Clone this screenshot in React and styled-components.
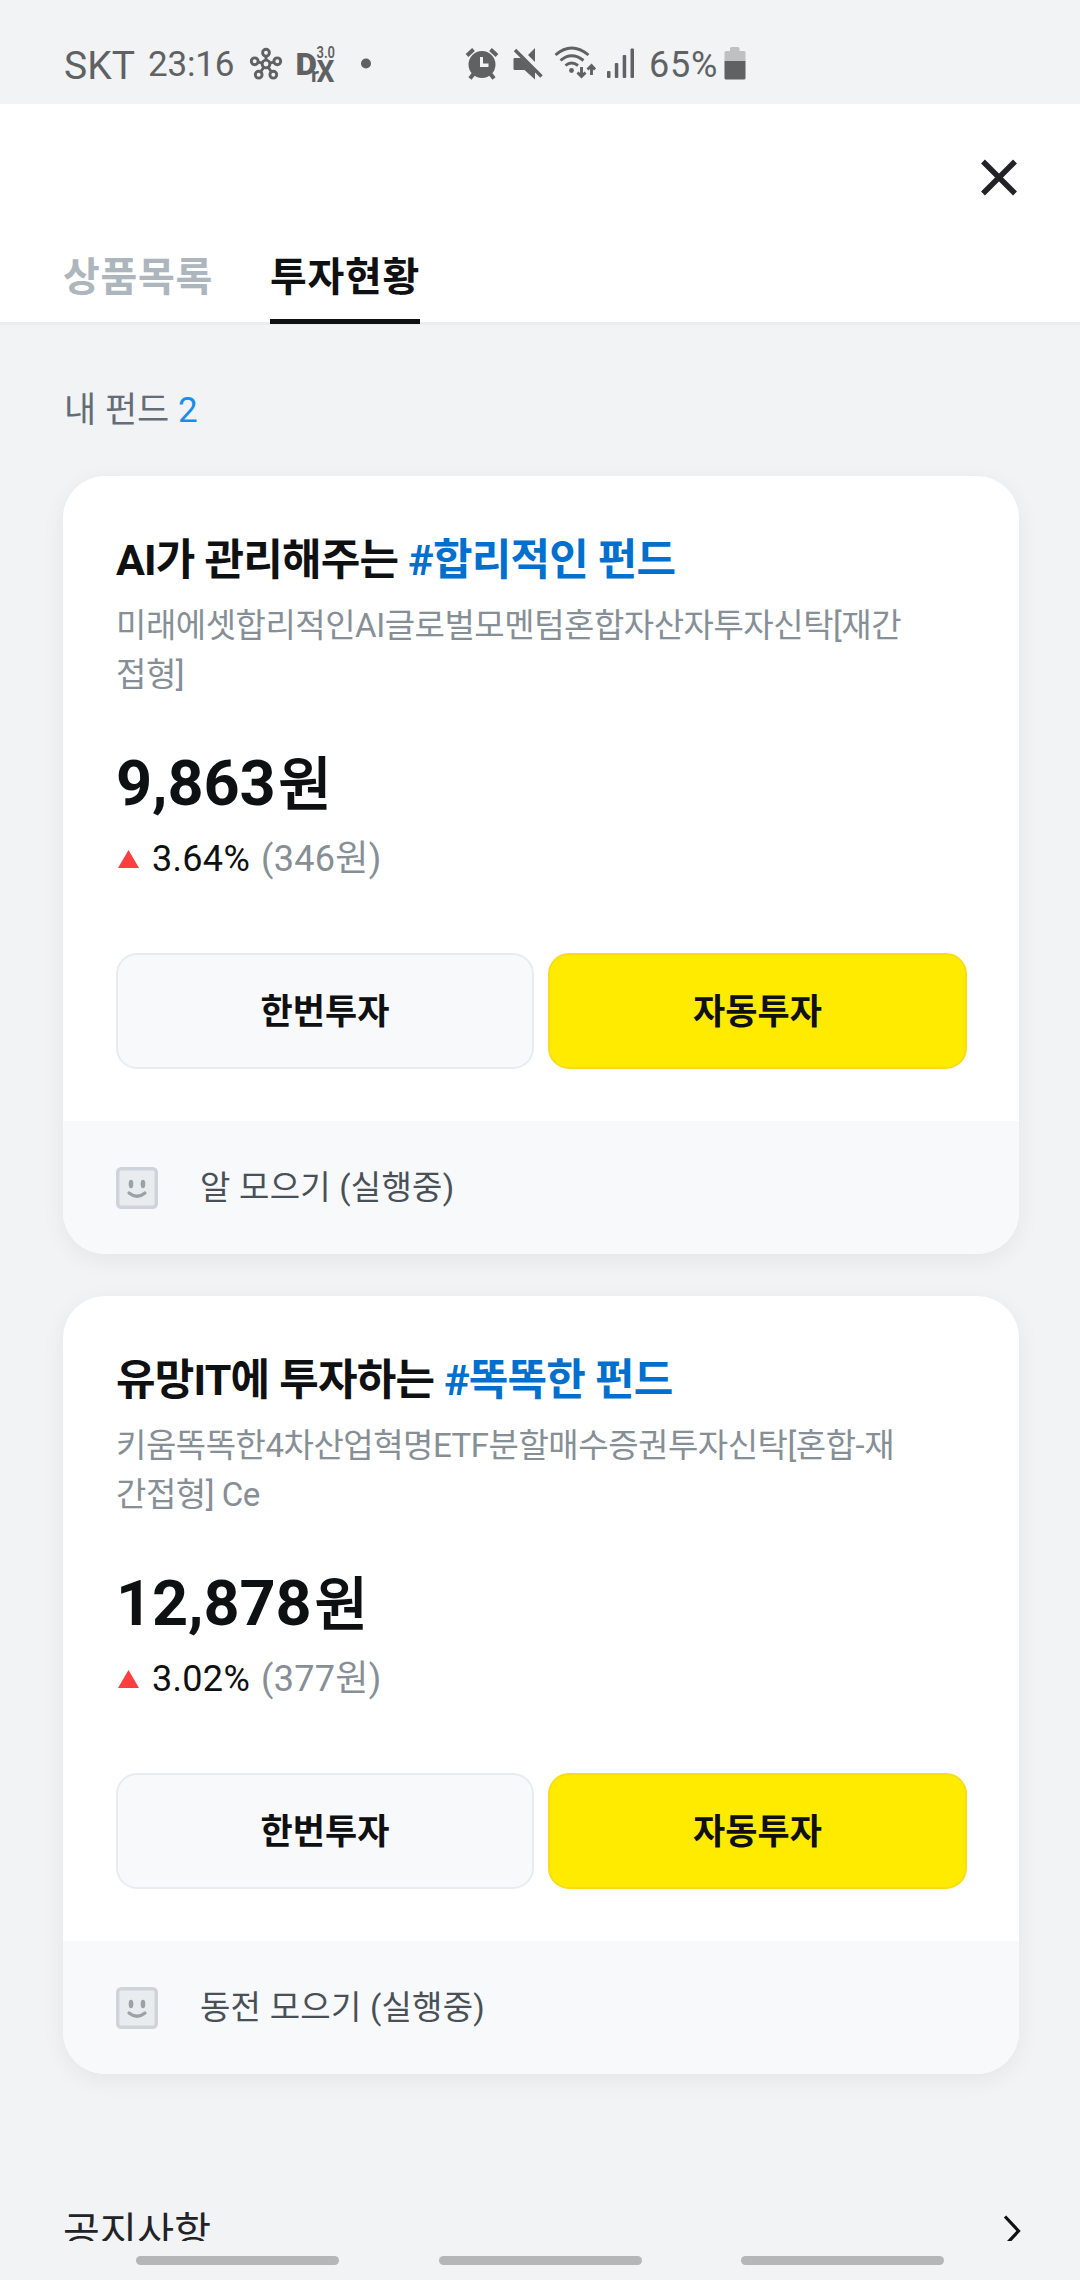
import styled, { createGlobalStyle } from "styled-components";

const GlobalStyle = createGlobalStyle`
    * {
        box-sizing: border-box;
    }
    body {
        margin: 0;
        background-color: #f1f3f5;
        font-family: Roboto, "Noto Sans CJK KR", sans-serif;
    }
    button {
        font-family: inherit;
    }
`

const Screen = styled.div`
    width: 1080px;
    height: 2280px;
    display: flex;
    flex-direction: column;
    overflow: hidden;
    background-color: #f1f3f5;
`

const StatusBar = styled.div`
    flex: none;
    height: 104px;
    padding: 44px 0 0 64px;
    display: flex;
    align-items: flex-start;
    color: #606163;
`

const StatusText = styled.span`
    width: ${props => props.$width}px;
    margin-left: ${props => props.$gap || 0}px;
    font-size: ${props => props.$size}px;
    line-height: ${props => props.$line}px;
    letter-spacing: ${props => props.$spacing || 0}px;
    white-space: nowrap;
`

const StatusIcon = styled.svg`
    flex: none;
    height: 40px;
    margin-left: ${props => props.$gap}px;
    fill: currentColor;
    overflow: visible;
`

const Header = styled.header`
    flex: none;
    height: 221px;
    display: flex;
    flex-direction: column;
    justify-content: space-between;
    background-color: #ffffff;
    border-bottom: 3px solid #ebedef;
`

const HeaderTop = styled.div`
    display: flex;
    justify-content: flex-end;
    padding: 54px 60px 0 0;
`

const CloseButton = styled.button`
    width: 40px;
    height: 40px;
    padding: 0;
    border: 0;
    background: none;
`

const Tabs = styled.nav`
    display: flex;
    gap: 57px;
    padding-left: 63px;
    margin-bottom: -2px;
`

const Tab = styled.div`
    width: 150px;
    height: 77px;
    border-bottom: 5px solid ${props => props.$active ? "#0f1012" : "transparent"};
    color: ${props => props.$active ? "#0f1012" : "#adb5bd"};
    font-size: 40px;
    font-weight: 700;
    line-height: 62px;
    letter-spacing: 0.7px;
    white-space: nowrap;
`

const Content = styled.main`
    flex: 1;
    min-height: 0;
    overflow: hidden;
    padding: 66px 61px 0 63px;
`

const SectionTitle = styled.div`
    margin-bottom: 45px;
    padding-left: 1px;
    font-size: 35px;
    line-height: 40px;
    color: #646d75;

    span {
        color: #1a8cf0;
    }
`

const Card = styled.section`
    height: 778px;
    margin-bottom: 42px;
    border-radius: 42px;
    overflow: hidden;
    background-color: #ffffff;
    box-shadow: 0 6px 24px rgba(0, 0, 0, 0.06);
`

const CardBody = styled.div`
    height: 645px;
    padding: 54px 52px 0 53px;
`

const FundTitle = styled.h2`
    margin: 0;
    font-size: 43px;
    font-weight: 700;
    line-height: 60px;
    letter-spacing: -0.8px;
    white-space: nowrap;
    color: #0f1012;

    span {
        color: #006fcd;
    }
`

const FundName = styled.p`
    margin: 11px 0 0;
    font-size: 33px;
    line-height: 49px;
    letter-spacing: -0.47px;
    white-space: pre-line;
    color: #868e96;
`

const Amount = styled.div`
    margin-top: 48px;
    font-size: 63px;
    font-weight: 700;
    line-height: 74px;
    letter-spacing: -0.1px;
    color: #0f1012;

    span {
        margin-left: 3px;
        font-size: 58px;
        font-weight: 400;
        -webkit-text-stroke: 1.8px #0f1012;
    }
`

const Change = styled.div`
    display: flex;
    align-items: center;
    margin-top: 12px;
    font-size: 36px;
    line-height: 50px;
    letter-spacing: 0.3px;
    color: #0f1012;

    svg {
        margin-left: 2px;
        margin-right: 13px;
    }

    span {
        margin-left: 11px;
        color: #868e96;
    }
`

const Buttons = styled.div`
    display: grid;
    grid-template-columns: 418px 1fr;
    gap: 14px;
    margin-top: 69px;
`

const InvestButton = styled.button`
    height: 116px;
    padding: 0 0 6px;
    border: 2px solid ${props => props.$primary ? "#f8dc16" : "#e9ecef"};
    border-radius: 21px;
    background-color: ${props => props.$primary ? "#ffeb00" : "#f8f9fb"};
    color: #0f1012;
    font-size: 35px;
    font-weight: 700;
`

const CardFooter = styled.div`
    height: 133px;
    display: flex;
    align-items: center;
    gap: 42px;
    padding-left: 53px;
    background-color: #f8f9fb;
    color: #495057;
    font-size: 33px;
    line-height: 48px;
    letter-spacing: 0.25px;
`

const NoticeRow = styled.div`
    display: flex;
    align-items: center;
    justify-content: space-between;
    height: 60px;
    margin-top: 127px;
    margin-right: -2px;
    font-size: 40px;
    color: #222227;
`

const NoticeTitle = styled.span`
    padding-bottom: 4px;
    letter-spacing: 0.3px;
`

const NavBar = styled.div`
    flex: none;
    height: 39px;
    display: flex;
    gap: 99.5px;
    padding: 15px 0 0 136px;
`

const NavHandle = styled.div`
    width: 203px;
    height: 9px;
    border-radius: 5px;
    background-color: #b5b6b8;
`

// small nodes around the centre of the hub icon
const hubNodes = [[16, 4.7], [4.7, 13.3], [27.3, 13.3], [8.7, 26.7], [23.3, 26.7]]

const funds = [
    {
        title: "AI가 관리해주는",
        tag: "#합리적인 펀드",
        name: "미래에셋합리적인AI글로벌모멘텀혼합자산자투자신탁[재간\n접형]",
        amount: "9,863",
        rate: "3.64%",
        profit: "(346원)",
        saving: "알 모으기 (실행중)",
    },
    {
        title: "유망IT에 투자하는",
        tag: "#똑똑한 펀드",
        name: "키움똑똑한4차산업혁명ETF분할매수증권투자신탁[혼합-재\n간접형] Ce",
        amount: "12,878",
        rate: "3.02%",
        profit: "(377원)",
        saving: "동전 모으기 (실행중)",
    },
]

function HubIcon() {
    return (
        <StatusIcon $gap={17} width="32" viewBox="0 -4 32 40">
            <g fill="none" stroke="currentColor" strokeWidth="2.9">
                {hubNodes.map(([x, y]) => (
                    <path key={`${x}-${y}`} d={`M${16 + (x - 16) * 0.3} ${16 + (y - 16) * 0.3}L${16 + (x - 16) * 0.68} ${16 + (y - 16) * 0.68}`}/>
                ))}
                {hubNodes.map(([x, y]) => <circle key={`${x}-${y}`} cx={x} cy={y} r="3.4"/>)}
                <circle cx="16" cy="16" r="3.9"/>
            </g>
        </StatusIcon>
    )
}

function DrxIcon() {
    return (
        <StatusIcon $gap={15} width="40" viewBox="0 0 40 40" fontFamily="Roboto" fontWeight="700">
            <text x="-1.5" y="31" fontSize="31" fontWeight="900" textLength="21.5" lengthAdjust="spacingAndGlyphs">D</text>
            <text x="14" y="38" fontSize="20" textLength="8" lengthAdjust="spacingAndGlyphs">r</text>
            <text x="19.5" y="38" fontSize="31" textLength="18" lengthAdjust="spacingAndGlyphs">X</text>
            <text x="19.5" y="13.5" fontSize="17" fontWeight="600" textLength="18.5" lengthAdjust="spacingAndGlyphs">3.0</text>
        </StatusIcon>
    )
}

function AlarmIcon() {
    return (
        <StatusIcon $gap={95} width="32" viewBox="0 -4 32 40">
            <path d="M16 3a13.5 13.5 0 1 0 0 27a13.5 13.5 0 1 0 0-27zM14 9h3v6.5h5.5v3.5h-8.5z" fillRule="evenodd"/>
            <path d="M1 7.5L7.5 1.5M31 7.5L24.5 1.5M7.5 26L4 30.5M24.5 26L28 30.5" stroke="currentColor" strokeWidth="4"/>
        </StatusIcon>
    )
}

function MuteIcon() {
    return (
        <StatusIcon $gap={15} width="30" viewBox="0 -4 30 40">
            <path d="M22 0v14L15 7zM1.5 10H8L22 23.5V31.5L11.5 22H1.5Q0.5 22 0.5 21V11Q0.5 10 1.5 10z"/>
            <path d="M2 2L28.5 28.5" stroke="currentColor" strokeWidth="3.4"/>
        </StatusIcon>
    )
}

function WifiIcon() {
    return (
        <StatusIcon $gap={11} width="42" viewBox="0 0 42 40">
            <g fill="none" stroke="currentColor" strokeWidth="2.9">
                <path d="M1.5 11Q17.5-3 34.5 11M6.5 16.5Q17.5 7 29.5 16.5M11.5 21.5Q17.5 16.5 24 21.5"/>
                <path d="M27.5 23V33M23.5 28.5L27.5 32.5L31.5 28.5M37.5 31V21.5M33.5 25.5L37.5 21.5L41 25.5"/>
            </g>
            <circle cx="17.5" cy="26.5" r="2.4"/>
        </StatusIcon>
    )
}

function SignalIcon() {
    return (
        <StatusIcon $gap={11} width="27" viewBox="0 0 27 40">
            <rect x="0" y="27" width="3.5" height="7" rx="1"/>
            <rect x="7.8" y="19" width="3.5" height="15" rx="1"/>
            <rect x="15.7" y="11" width="3.5" height="23" rx="1"/>
            <rect x="23.5" y="4.5" width="3.5" height="29.5" rx="1"/>
        </StatusIcon>
    )
}

function BatteryIcon() {
    return (
        <StatusIcon $gap={5} width="22" viewBox="0 0 22 40">
            <path d="M6 7V4.5Q6 3 7.5 3H14Q15.5 3 15.5 4.5V7H20Q21.5 7 21.5 8.5V17H0.5V8.5Q0.5 7 2 7z" opacity="0.35"/>
            <path d="M0.5 17H21.5V34Q21.5 35.5 20 35.5H2Q0.5 35.5 0.5 34z"/>
        </StatusIcon>
    )
}

function FaceIcon() {
    return (
        <svg width="42" height="42" viewBox="0 0 42 42" fill="none">
            <rect x="1.75" y="1.75" width="38.5" height="38.5" rx="3.5" fill="#e9ecef" stroke="#ced4da" strokeWidth="3.5"/>
            <ellipse cx="15" cy="17" rx="2.3" ry="4.2" fill="#9aa1a7"/>
            <ellipse cx="27" cy="17" rx="2.3" ry="4.2" fill="#9aa1a7"/>
            <path d="M13 26Q21 32.5 29 26" stroke="#9aa1a7" strokeWidth="3.2" strokeLinecap="round"/>
        </svg>
    )
}

function FundCard({fund}) {
    return (
        <Card>
            <CardBody>
                <FundTitle>{fund.title} <span>{fund.tag}</span></FundTitle>
                <FundName>{fund.name}</FundName>
                <Amount>{fund.amount}<span>원</span></Amount>
                <Change>
                    <svg width="21" height="18" viewBox="0 0 21 18">
                        <path d="M10.5 0L21 18H0z" fill="#ff3f3f"/>
                    </svg>
                    {fund.rate}
                    <span>{fund.profit}</span>
                </Change>
                <Buttons>
                    <InvestButton>한번투자</InvestButton>
                    <InvestButton $primary>자동투자</InvestButton>
                </Buttons>
            </CardBody>
            <CardFooter>
                <FaceIcon/>
                {fund.saving}
            </CardFooter>
        </Card>
    )
}

function App() {
    return (
        <Screen>
            <GlobalStyle/>
            <StatusBar>
                <StatusText $width={70} $size={39} $line={44}>SKT</StatusText>
                <StatusText $width={85} $gap={14} $size={35} $line={41} $spacing={-0.2}>23:16</StatusText>
                <HubIcon/>
                <DrxIcon/>
                <StatusIcon $gap={24} width="10" viewBox="0 0 10 40">
                    <circle cx="5" cy="19.5" r="5"/>
                </StatusIcon>
                <AlarmIcon/>
                <MuteIcon/>
                <WifiIcon/>
                <SignalIcon/>
                <StatusText $width={70} $gap={15} $size={36} $line={42} $spacing={0.8}>65%</StatusText>
                <BatteryIcon/>
            </StatusBar>
            <Header>
                <HeaderTop>
                    <CloseButton>
                        <svg width="40" height="40" viewBox="0 0 40 40">
                            <path d="M3 3.5L35 35.5M35 3.5L3 35.5" stroke="#222227" strokeWidth="5.5"/>
                        </svg>
                    </CloseButton>
                </HeaderTop>
                <Tabs>
                    <Tab>상품목록</Tab>
                    <Tab $active>투자현황</Tab>
                </Tabs>
            </Header>
            <Content>
                <SectionTitle>내 펀드 <span>2</span></SectionTitle>
                {funds.map(fund => <FundCard key={fund.title} fund={fund}/>)}
                <NoticeRow>
                    <NoticeTitle>공지사항</NoticeTitle>
                    <svg width="18" height="34" viewBox="0 0 18 34">
                        <path d="M2 2.5L15.5 17L2 31.5" fill="none" stroke="#0f1012" strokeWidth="3.2"/>
                    </svg>
                </NoticeRow>
            </Content>
            <NavBar>
                <NavHandle/>
                <NavHandle/>
                <NavHandle/>
            </NavBar>
        </Screen>
    )
}

export default App;
